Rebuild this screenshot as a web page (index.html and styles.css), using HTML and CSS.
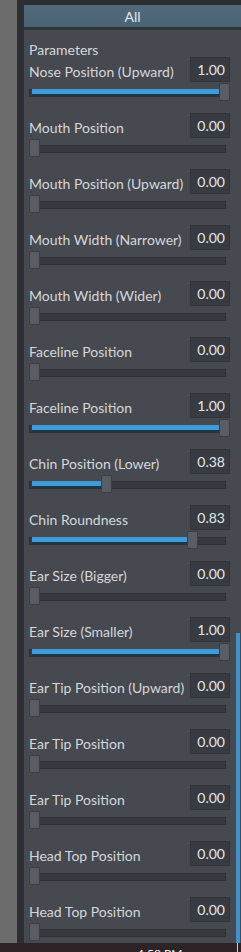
FILE: index.html
```html
<!DOCTYPE html>
<html lang="en">
<head>
  <meta charset="UTF-8">
  <meta name="viewport" content="width=device-width, initial-scale=1.0">
  <title>Parameters</title>
  <link rel="stylesheet" href="styles.css">
</head>
<body>
  <div class="screen">
    <div class="side"></div>
    <div class="edge"></div>
    <div class="panel">
      <div class="topband"></div>
      <div class="tabbar">All</div>
      <div class="content">
        <div class="group-title">Parameters</div>

        <div class="param">
          <div class="param-head"><span class="param-name">Nose Position (Upward)</span><span class="param-value">1.00</span></div>
          <div class="slider" style="--v:1"><div class="groove"></div><div class="fill"></div><div class="handle"></div></div>
        </div>
        <div class="param">
          <div class="param-head"><span class="param-name">Mouth Position</span><span class="param-value">0.00</span></div>
          <div class="slider" style="--v:0"><div class="groove"></div><div class="fill"></div><div class="handle"></div></div>
        </div>
        <div class="param">
          <div class="param-head"><span class="param-name">Mouth Position (Upward)</span><span class="param-value">0.00</span></div>
          <div class="slider" style="--v:0"><div class="groove"></div><div class="fill"></div><div class="handle"></div></div>
        </div>
        <div class="param">
          <div class="param-head"><span class="param-name">Mouth Width (Narrower)</span><span class="param-value">0.00</span></div>
          <div class="slider" style="--v:0"><div class="groove"></div><div class="fill"></div><div class="handle"></div></div>
        </div>
        <div class="param">
          <div class="param-head"><span class="param-name">Mouth Width (Wider)</span><span class="param-value">0.00</span></div>
          <div class="slider" style="--v:0"><div class="groove"></div><div class="fill"></div><div class="handle"></div></div>
        </div>
        <div class="param">
          <div class="param-head"><span class="param-name">Faceline Position</span><span class="param-value">0.00</span></div>
          <div class="slider" style="--v:0"><div class="groove"></div><div class="fill"></div><div class="handle"></div></div>
        </div>
        <div class="param">
          <div class="param-head"><span class="param-name">Faceline Position</span><span class="param-value">1.00</span></div>
          <div class="slider" style="--v:1"><div class="groove"></div><div class="fill"></div><div class="handle"></div></div>
        </div>
        <div class="param">
          <div class="param-head"><span class="param-name">Chin Position (Lower)</span><span class="param-value">0.38</span></div>
          <div class="slider" style="--v:0.38"><div class="groove"></div><div class="fill"></div><div class="handle"></div></div>
        </div>
        <div class="param">
          <div class="param-head"><span class="param-name">Chin Roundness</span><span class="param-value">0.83</span></div>
          <div class="slider" style="--v:0.83"><div class="groove"></div><div class="fill"></div><div class="handle"></div></div>
        </div>
        <div class="param">
          <div class="param-head"><span class="param-name">Ear Size (Bigger)</span><span class="param-value">0.00</span></div>
          <div class="slider" style="--v:0"><div class="groove"></div><div class="fill"></div><div class="handle"></div></div>
        </div>
        <div class="param">
          <div class="param-head"><span class="param-name">Ear Size (Smaller)</span><span class="param-value">1.00</span></div>
          <div class="slider" style="--v:1"><div class="groove"></div><div class="fill"></div><div class="handle"></div></div>
        </div>
        <div class="param">
          <div class="param-head"><span class="param-name">Ear Tip Position (Upward)</span><span class="param-value">0.00</span></div>
          <div class="slider" style="--v:0"><div class="groove"></div><div class="fill"></div><div class="handle"></div></div>
        </div>
        <div class="param">
          <div class="param-head"><span class="param-name">Ear Tip Position</span><span class="param-value">0.00</span></div>
          <div class="slider" style="--v:0"><div class="groove"></div><div class="fill"></div><div class="handle"></div></div>
        </div>
        <div class="param">
          <div class="param-head"><span class="param-name">Ear Tip Position</span><span class="param-value">0.00</span></div>
          <div class="slider" style="--v:0"><div class="groove"></div><div class="fill"></div><div class="handle"></div></div>
        </div>
        <div class="param">
          <div class="param-head"><span class="param-name">Head Top Position</span><span class="param-value">0.00</span></div>
          <div class="slider" style="--v:0"><div class="groove"></div><div class="fill"></div><div class="handle"></div></div>
        </div>
        <div class="param">
          <div class="param-head"><span class="param-name">Head Top Position</span><span class="param-value">0.00</span></div>
          <div class="slider" style="--v:0"><div class="groove"></div><div class="fill"></div><div class="handle"></div></div>
        </div>
      </div>
      <div class="scroll-thumb"></div>
    </div>
  </div>
  <div class="taskbar"><span class="clock">4:58 PM</span><span class="taskbar-edge"></span></div>
</body>
</html>
```

FILE: styles.css
```css
body {
  margin: 0;
  font-family: Lato, "Noto Sans", sans-serif;
  background-color: #2e2327;
  overflow: hidden;
}

.screen {
  display: flex;
  height: 943px;
  overflow: hidden;
}

.side {
  width: 17px;
  background-color: #6c6c6c;
}

.edge {
  width: 7px;
  background-color: #2c3034;
}

.panel {
  position: relative;
  flex: 1;
  display: flex;
  flex-direction: column;
  background-color: #464a50;
  overflow: hidden;
}

.topband {
  flex-shrink: 0;
  height: 5px;
  background-color: #2b2e33;
}

.tabbar {
  flex-shrink: 0;
  height: 22px;
  line-height: 23px;
  text-align: center;
  font-size: 14px;
  color: #e1e6ea;
  background: linear-gradient(#52697a, #4a6374);
  border-bottom: 3px solid #2e3338;
}

.content {
  flex-shrink: 0;
  padding: 11px 11px 0 5px;
}

.group-title {
  height: 16px;
  line-height: 18px;
  font-size: 14px;
  color: #d4d7da;
}

.param {
  margin-bottom: 12px;
}

.param-head {
  display: flex;
  justify-content: space-between;
  align-items: center;
  height: 25px;
}

.param-name {
  font-size: 14px;
  color: #d4d7da;
  padding-top: 3px;
  white-space: nowrap;
}

.param-value {
  box-sizing: border-box;
  width: 40px;
  height: 25px;
  padding-top: 2px;
  line-height: 20px;
  padding-right: 4px;
  text-align: right;
  font-size: 14px;
  color: #e2e5e8;
  background-color: #383c42;
  border: 1px solid #31353a;
}

.slider {
  position: relative;
  height: 18px;
  margin-top: 1px;
}

.groove {
  position: absolute;
  left: 0;
  right: 4px;
  top: 6px;
  height: 8px;
  box-sizing: border-box;
  background-color: #363a3f;
  border: 1px solid #2c2f33;
}

.fill {
  position: absolute;
  left: 3px;
  top: 6px;
  height: 5px;
  width: calc(var(--v) * 190px);
  background-color: #3d9cd8;
  border-bottom: 2px solid #1e3546;
}

.handle {
  position: absolute;
  top: 0;
  left: calc(var(--v) * 190px);
  width: 11px;
  height: 18px;
  box-sizing: border-box;
  background-color: #595e65;
  border: 1px solid #3b3f44;
  border-radius: 2px;
}

.scroll-thumb {
  position: absolute;
  right: 1px;
  top: 633px;
  bottom: 0;
  width: 4px;
  background-color: #3e93cc;
}

.taskbar {
  position: relative;
  height: 9px;
  overflow: hidden;
}

.clock {
  position: absolute;
  left: 137px;
  top: 3px;
  font-size: 12px;
  color: #f2f2f2;
}

.taskbar-edge {
  position: absolute;
  right: 3px;
  top: 0;
  bottom: 0;
  width: 1px;
  background-color: #cfcfcf;
}
```
